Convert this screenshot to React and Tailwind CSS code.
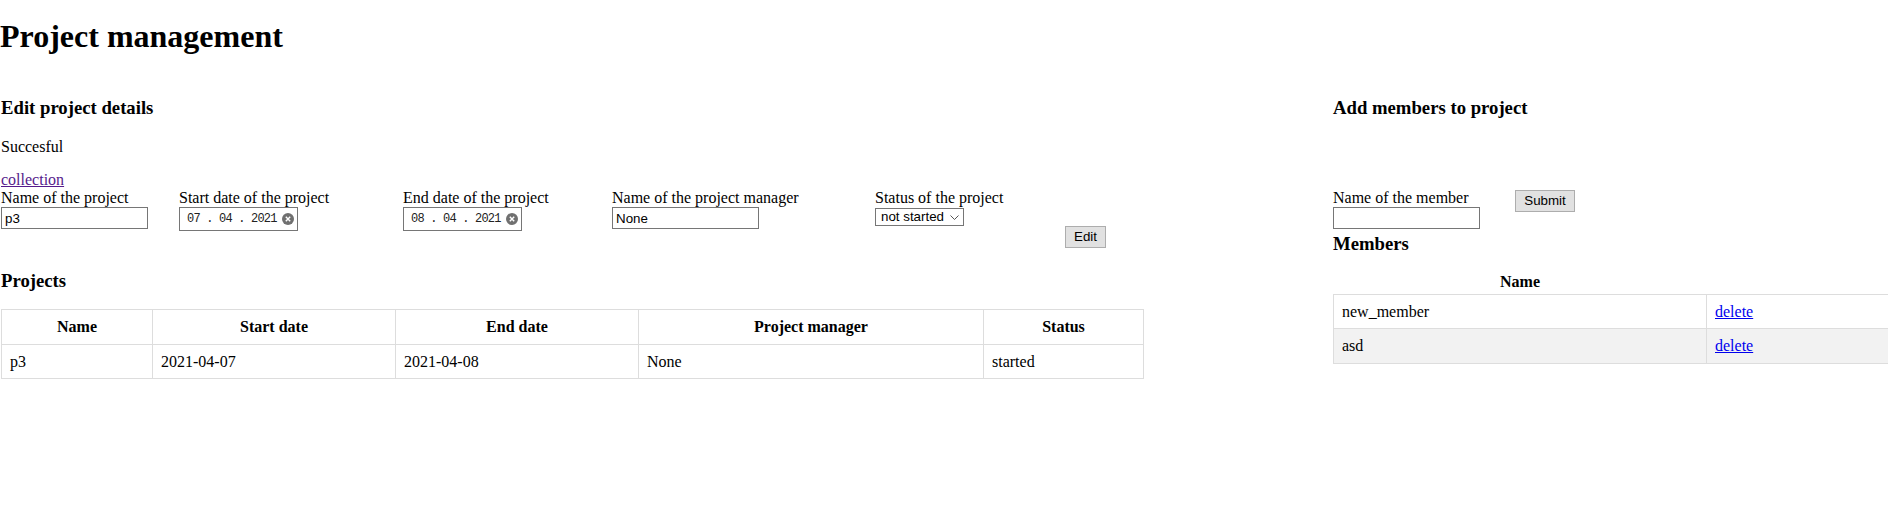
const serif = "font-['Liberation_Serif','Times_New_Roman',serif]"
const sans = "font-['Liberation_Sans',Arial,sans-serif]"

function DateBox({ value }) {
  return (
    <div className="flex h-[24px] w-[119px] items-center border border-[#767676] pl-[7px] pr-[3px]">
      <span className="font-['Liberation_Mono','Courier_New',monospace] text-[12px] tracking-[-0.8px] text-[#222]">
        {value}
      </span>
      <span className="ml-auto flex h-[12px] w-[12px] items-center justify-center rounded-full bg-[#707070]">
        <svg width="6" height="6" viewBox="0 0 6 6">
          <path d="M0.8 0.8 L5.2 5.2 M5.2 0.8 L0.8 5.2" stroke="white" strokeWidth="1.4" />
        </svg>
      </span>
    </div>
  )
}

function TextBox({ value, width = 'w-[147px]' }) {
  return (
    <input
      readOnly
      value={value}
      className={`${sans} block h-[22px] ${width} border border-[#767676] px-[3px] text-[13.33px] text-black outline-none`}
    />
  )
}

function Field({ label, width, children }) {
  return (
    <div className={`${width} shrink-0`}>
      <label className="block leading-[18px]">{label}</label>
      {children}
    </div>
  )
}

export default function App() {
  const projects = [{ name: 'p3', start: '2021-04-07', end: '2021-04-08', manager: 'None', status: 'started' }]
  const members = ['new_member', 'asd']

  return (
    <div className={`${serif} h-[521px] w-[1888px] overflow-hidden bg-white text-[16px] text-black`}>
      <h1 className="mt-[19px] mb-[21px] text-[32px] font-bold leading-[35px]">Project management</h1>

      <div className="flex">
        <section className="w-[1143px] shrink-0 pl-px">
          <h3 className="mt-[22px] text-[18.72px] font-bold leading-[21px]">Edit project details</h3>
          <p className="mt-[20px] leading-[18px]">Succesful</p>
          <a href="#" className="mt-[15px] block w-fit leading-[18px] text-[#551a8b] underline">collection</a>

          <div className="flex">
            <Field label="Name of the project" width="w-[178px]">
              <TextBox value="p3" />
            </Field>
            <Field label="Start date of the project" width="w-[224px]">
              <DateBox value="07 . 04 . 2021" />
            </Field>
            <Field label="End date of the project" width="w-[209px]">
              <DateBox value="08 . 04 . 2021" />
            </Field>
            <Field label="Name of the project manager" width="w-[263px]">
              <TextBox value="None" />
            </Field>
            <Field label="Status of the project" width="w-[190px]">
              <div className={`${sans} mt-[1px] flex h-[18px] w-[89px] items-center border border-[#767676] pl-[5px] pr-[4px] text-[13.33px]`}>
                <span>not started</span>
                <svg className="ml-auto" width="9" height="5" viewBox="0 0 9 5">
                  <path d="M0.5 0.5 L4.5 4.5 L8.5 0.5" fill="none" stroke="#555" strokeWidth="1" />
                </svg>
              </div>
            </Field>
            <button className={`${sans} mt-[37px] h-[22px] w-[41px] self-start border border-[#adadad] bg-[#e1e1e1] text-[13.33px] text-black`}>
              Edit
            </button>
          </div>

          <h3 className="mt-[22px] text-[18.72px] font-bold leading-[21px]">Projects</h3>
          <table className="mt-[18px] w-[1142px] table-fixed border-collapse">
            <colgroup>
              <col className="w-[151px]" />
              <col className="w-[243px]" />
              <col className="w-[243px]" />
              <col className="w-[345px]" />
              <col className="w-[160px]" />
            </colgroup>
            <thead>
              <tr>
                {['Name', 'Start date', 'End date', 'Project manager', 'Status'].map((h) => (
                  <th key={h} className="border border-[#ddd] p-2 text-center font-bold leading-[17.7px]">{h}</th>
                ))}
              </tr>
            </thead>
            <tbody>
              {projects.map((p) => (
                <tr key={p.name}>
                  <td className="border border-[#ddd] p-2 leading-[17.7px]">{p.name}</td>
                  <td className="border border-[#ddd] p-2 leading-[17.7px]">{p.start}</td>
                  <td className="border border-[#ddd] p-2 leading-[17.7px]">{p.end}</td>
                  <td className="border border-[#ddd] p-2 leading-[17.7px]">{p.manager}</td>
                  <td className="border border-[#ddd] p-2 leading-[17.7px]">{p.status}</td>
                </tr>
              ))}
            </tbody>
          </table>
        </section>

        <section className="ml-[190px] w-[600px] shrink-0">
          <h3 className="mt-[22px] text-[18.72px] font-bold leading-[21px]">Add members to project</h3>

          <div className="mt-[71px] flex">
            <div className="w-[182px] shrink-0">
              <label className="block leading-[18px]">Name of the member</label>
              <TextBox value="" />
            </div>
            <button className={`${sans} mt-[1px] h-[22px] w-[60px] self-start border border-[#adadad] bg-[#e1e1e1] text-[13.33px] text-black`}>
              Submit
            </button>
          </div>

          <h3 className="mt-[4px] text-[18.72px] font-bold leading-[21px]">Members</h3>
          <table className="mt-[19px] w-[600px] table-fixed border-collapse">
            <colgroup>
              <col className="w-[373px]" />
              <col />
            </colgroup>
            <thead>
              <tr>
                <th className="pb-[3px] text-center font-bold leading-[17.7px]">Name</th>
                <th />
              </tr>
            </thead>
            <tbody>
              {members.map((m, i) => (
                <tr key={m} className={i % 2 === 1 ? 'bg-[#f2f2f2]' : ''}>
                  <td className="border border-[#ddd] p-2 leading-[17.7px]">{m}</td>
                  <td className="border border-[#ddd] p-2 leading-[17.7px]">
                    <a href="#" className="text-[#0000ee] underline">delete</a>
                  </td>
                </tr>
              ))}
            </tbody>
          </table>
        </section>
      </div>
    </div>
  )
}
